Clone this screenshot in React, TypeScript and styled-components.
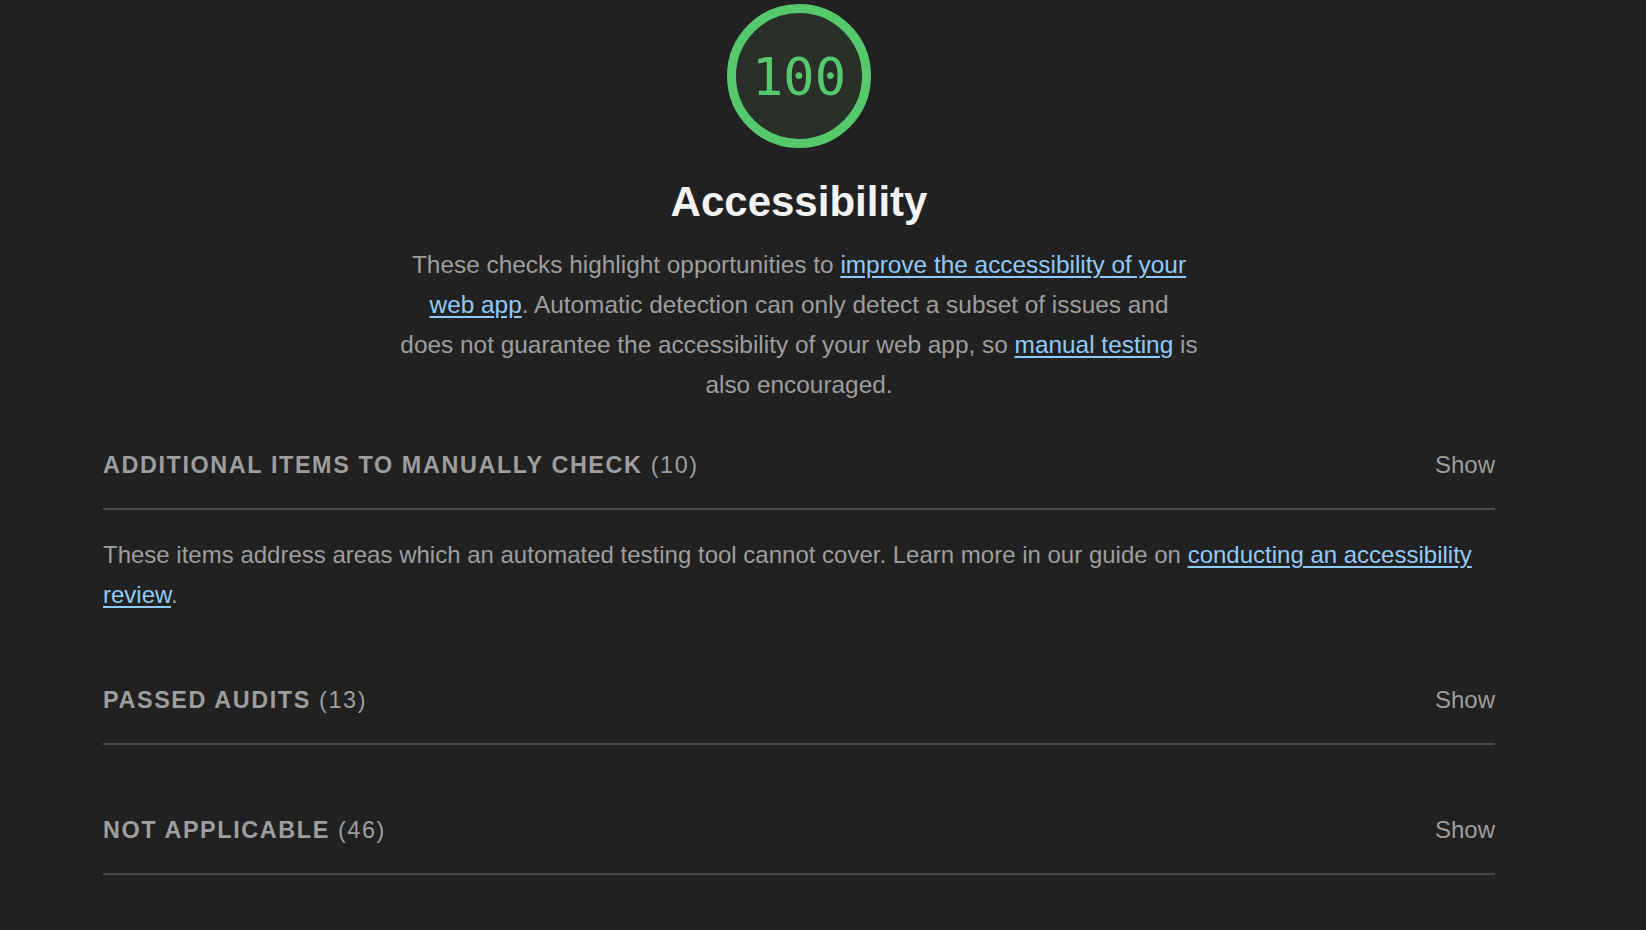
import React from 'react';
import styled, { createGlobalStyle } from 'styled-components';

const GlobalStyle = createGlobalStyle`
  html, body {
    margin: 0;
    padding: 0;
    background: #212121;
  }
  body {
    font-family: 'Liberation Sans', Arial, sans-serif;
    -webkit-font-smoothing: antialiased;
  }
`;

const Page = styled.div`
  min-height: 100vh;
  background: #212121;
  padding: 4px 151px 60px 103px;
  box-sizing: border-box;
`;

const Header = styled.header`
  display: flex;
  flex-direction: column;
  align-items: center;
`;

const Gauge = styled.div<{ $color: string }>`
  width: 144px;
  height: 144px;
  box-sizing: border-box;
  border-radius: 50%;
  border: 9px solid ${(p) => p.$color};
  background: #29302a;
  display: flex;
  align-items: center;
  justify-content: center;
`;

const Score = styled.span<{ $color: string }>`
  font-family: 'DejaVu Sans Mono', 'Liberation Mono', monospace;
  font-size: 52px;
  line-height: 1;
  color: ${(p) => p.$color};
  margin-top: 1px;
`;

const Title = styled.h1`
  margin: 29px 0 0;
  font-size: 42px;
  line-height: 50px;
  font-weight: 700;
  color: #f3f3f3;
`;

const Description = styled.p`
  margin: 18px 0 0;
  max-width: 797.6px;
  text-align: center;
  font-size: 24.4px;
  line-height: 40px;
  color: #9e9e9e;
`;

const Link = styled.a`
  color: #90caf9;
  text-decoration: underline;
  text-underline-offset: 3px;
`;

const Groups = styled.div`
  margin-top: 15px;
  display: flex;
  flex-direction: column;
`;

const Group = styled.section`
  margin-bottom: 40px;
`;

const Summary = styled.div`
  height: 90px;
  box-sizing: border-box;
  padding-top: 2px;
  display: flex;
  align-items: center;
  justify-content: space-between;
  border-bottom: 2px solid #474747;
`;

const GroupTitle = styled.span`
  font-size: 23.4px;
  font-weight: 700;
  letter-spacing: 1.6px;
  text-transform: uppercase;
  color: #9e9e9e;
`;

const Count = styled.span`
  font-weight: 400;
`;

const Toggle = styled.span`
  font-size: 24px;
  color: #9e9e9e;
  cursor: pointer;
`;

const GroupText = styled.p`
  margin: 25px 0 0;
  font-size: 24px;
  line-height: 40px;
  color: #9e9e9e;
`;

type GroupInfo = {
  title: string;
  count: number;
  text?: React.ReactNode;
};

const groups: GroupInfo[] = [
  {
    title: 'Additional items to manually check',
    count: 10,
    text: (
      <>
        These items address areas which an automated testing tool cannot cover. Learn more in our
        guide on <Link href="#">conducting an accessibility review</Link>.
      </>
    ),
  },
  { title: 'Passed audits', count: 13 },
  { title: 'Not applicable', count: 46 },
];

const PASS = '#57c96d';

const App = () => {
  return (
    <Page>
      <GlobalStyle />
      <Header>
        <Gauge $color={PASS}>
          <Score $color={PASS}>100</Score>
        </Gauge>
        <Title>Accessibility</Title>
        <Description>
          These checks highlight opportunities to{' '}
          <Link href="#">improve the accessibility of your web app</Link>. Automatic detection can
          only detect a subset of issues and does not guarantee the accessibility of your web app, so{' '}
          <Link href="#">manual testing</Link> is also encouraged.
        </Description>
      </Header>
      <Groups>
        {groups.map((g) => (
          <Group key={g.title}>
            <Summary>
              <GroupTitle>
                {g.title} <Count>({g.count})</Count>
              </GroupTitle>
              <Toggle>Show</Toggle>
            </Summary>
            {g.text && <GroupText>{g.text}</GroupText>}
          </Group>
        ))}
      </Groups>
    </Page>
  );
};

export default App;
